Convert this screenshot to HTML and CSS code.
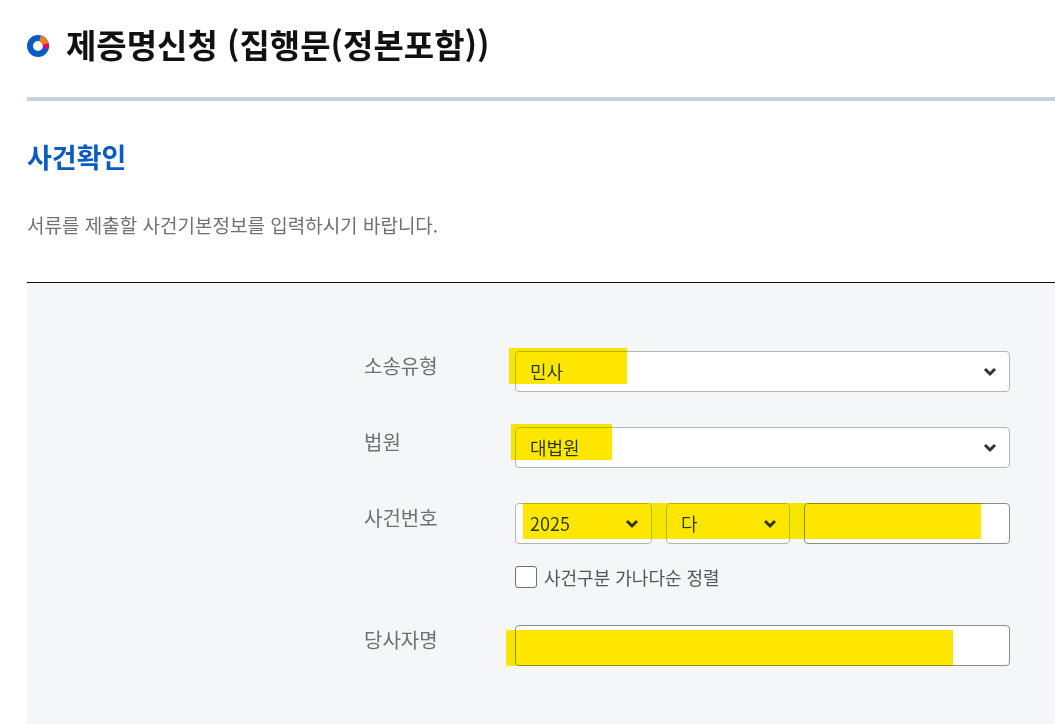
FILE: index.html
```html
<!DOCTYPE html>
<html lang="ko">
<head>
  <meta charset="UTF-8">
  <meta name="viewport" content="width=device-width, initial-scale=1.0">
  <title>제증명신청</title>
  <link rel="stylesheet" href="styles.css">
</head>
<body>
  <main class="page">
    <header class="page-title">
      <svg class="ring" viewBox="0 0 22 26" fill="none" stroke-width="6" aria-hidden="true">
        <circle cx="11" cy="15" r="8" stroke="#0a5bc2"/>
        <path d="M13 7.300A8 8 0 0 1 18.8 13.5" stroke="#f57c0a"/>
        <path d="M18.7 12.9A8 8 0 0 1 18.5 17.6" stroke="#d6087e"/>
      </svg>
      <h1>제증명신청 (집행문(정본포함))</h1>
    </header>

    <h2>사건확인</h2>
    <p class="guide">서류를 제출할 사건기본정보를 입력하시기 바랍니다.</p>

    <form class="case-form">
      <label class="name" for="type">소송유형</label>
      <div class="field">
        <div class="select">
          <select id="type"><option>민사</option></select>
          <svg viewBox="0 0 14 10" aria-hidden="true"><path d="M2 2l5 5 5-5"/></svg>
        </div>
        <span class="mark mark-type"></span>
      </div>

      <label class="name" for="court">법원</label>
      <div class="field">
        <div class="select">
          <select id="court"><option>대법원</option></select>
          <svg viewBox="0 0 14 10" aria-hidden="true"><path d="M2 2l5 5 5-5"/></svg>
        </div>
        <span class="mark mark-court"></span>
      </div>

      <label class="name" for="year">사건번호</label>
      <div class="field">
        <div class="case-number">
          <div class="select">
            <select id="year"><option>2025</option></select>
            <svg viewBox="0 0 14 10" aria-hidden="true"><path d="M2 2l5 5 5-5"/></svg>
          </div>
          <div class="select">
            <select aria-label="사건구분"><option>다</option></select>
            <svg viewBox="0 0 14 10" aria-hidden="true"><path d="M2 2l5 5 5-5"/></svg>
          </div>
          <input type="text" aria-label="일련번호">
        </div>
        <label class="check"><input type="checkbox">사건구분 가나다순 정렬</label>
        <span class="mark mark-number"></span>
      </div>

      <label class="name" for="party">당사자명</label>
      <div class="field">
        <input type="text" id="party">
        <span class="mark mark-party"></span>
      </div>
    </form>
  </main>
</body>
</html>
```
FILE: styles.css
```css
* {
  box-sizing: border-box;
}
body {
  margin: 0;
  background-color: #fff;
  color: #707070;
  font-family: "Noto Sans CJK KR", sans-serif;
}
.page {
  display: flex;
  flex-direction: column;
  min-height: 100vh;
  padding-left: 27px;
}
.page-title {
  display: flex;
  align-items: center;
  gap: 17px;
  padding: 19px 0 28px;
  border-bottom: 4px solid #c9d1de;
}
.ring {
  width: 22px;
  height: 26px;
}
h1 {
  margin: 0;
  color: #111;
  font-size: 33px;
  font-weight: 700;
  line-height: 50px;
}
h2 {
  margin: 36px 0 0;
  color: #0a5bc2;
  font-size: 27px;
  font-weight: 700;
  line-height: 40px;
}
.guide {
  margin: 33px 0 43px;
  font-size: 19px;
  line-height: 29px;
}

/* form */
.case-form {
  flex: 1;
  display: grid;
  grid-template-columns: 151px 1fr;
  align-content: start;
  row-gap: 35px;
  padding: 68px 45px 58px 337px;
  background-color: #f4f6f8;
  border-top: 1px solid #111;
}
.name {
  font-size: 20px;
  line-height: 30px;
}
.field {
  position: relative;
}
.select {
  position: relative;
}
select,
input[type="text"] {
  display: block;
  width: 100%;
  height: 41px;
  margin: 0;
  padding: 0 14px 2px;
  border: 1px solid #b5b5b5;
  border-radius: 4px;
  background-color: #fff;
  color: #333;
  font-family: inherit;
  font-size: 18px;
  appearance: none;
}
input[type="text"] {
  border-color: #8e8e92;
}
.select svg {
  position: absolute;
  top: 16px;
  right: 13px;
  width: 14px;
  height: 10px;
  fill: none;
  stroke: #333;
  stroke-width: 3;
  pointer-events: none;
}
.case-number {
  display: grid;
  grid-template-columns: 137fr 124fr 206fr;
  gap: 14px;
}
.check {
  display: flex;
  align-items: center;
  gap: 7px;
  margin-top: 20px;
  color: #555;
  font-size: 18px;
  line-height: 26px;
}
.check input {
  width: 22px;
  height: 22px;
  margin: 0;
  border: 1px solid #707070;
  border-radius: 3px;
  background-color: #fff;
  appearance: none;
}
.check input:checked {
  background-color: #0a5bc2;
}

/* highlighter */
.mark {
  position: absolute;
  height: 36px;
  background-color: #ffe600;
  mix-blend-mode: darken;
  pointer-events: none;
}
.mark-type {
  top: -3px;
  left: -6px;
  width: 118px;
}
.mark-court {
  top: -3px;
  left: -4px;
  width: 101px;
}
.mark-number {
  top: 0;
  left: 8px;
  width: 458px;
}
.mark-party {
  top: 5px;
  left: -9px;
  width: 447px;
}
```
